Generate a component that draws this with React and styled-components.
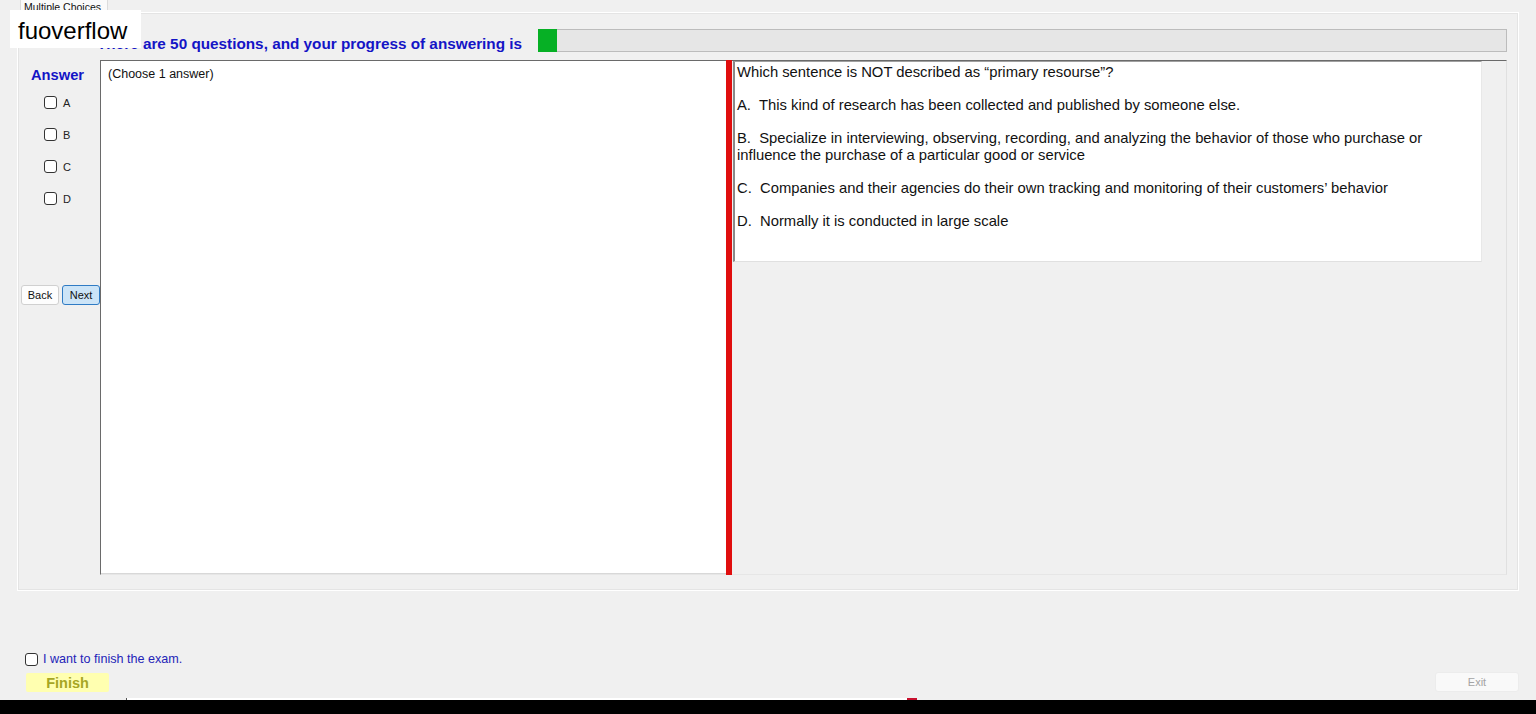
import React from "react";
import styled, { createGlobalStyle } from "styled-components";

const Global = createGlobalStyle`
  html, body { margin: 0; padding: 0; background: #f0f0f0; }
  body { width: 1536px; height: 714px; overflow: hidden; font-family: "Liberation Sans", Arial, sans-serif; }
  * { box-sizing: border-box; }
`;

const Page = styled.div`
  position: relative;
  width: 1536px;
  height: 714px;
  display: flex;
  flex-direction: column;
  background: #f0f0f0;
`;

const TabStrip = styled.div`
  height: 12px;
  display: flex;
  padding-left: 20px;
`;

const Tab = styled.div`
  height: 12px;
  width: 88px;
  background: #fafafa;
  border: 1px solid #dcdcdc;
  border-top: none;
  border-bottom: none;
  font-size: 10.5px;
  line-height: 14px;
  color: #111;
  padding-left: 3px;
  overflow: hidden;
  white-space: nowrap;
`;

const TabPage = styled.div`
  margin: 0 17px;
  height: 579px;
  border: 1px solid #ffffff;
  box-shadow: inset 0 0 0 1px #e4e4e4;
  display: flex;
  flex-direction: column;
  padding-top: 16px;
`;

const Header = styled.div`
  display: flex;
  align-items: flex-end;
  height: 23px;
  padding-left: 79px;
  padding-right: 11px;
`;

const Title = styled.div`
  font-weight: bold;
  font-size: 15.3px;
  line-height: 17px;
  color: #1414c6;
  margin-right: 16px;
  white-space: nowrap;
`;

const Progress = styled.div`
  flex: 1;
  height: 23px;
  background: #e6e6e6;
  border: 1px solid #bcbcbc;
  display: flex;
`;

const ProgressFill = styled.div`
  background: #06b025;
  margin: -1px 0 -1px -1px;
  height: calc(100% + 2px);
`;

const Main = styled.div`
  display: flex;
  height: 515px;
  margin-top: 8px;
  padding-right: 11px;
`;

const LeftCol = styled.div`
  width: 82px;
  display: flex;
  flex-direction: column;
`;

const AnswerLabel = styled.div`
  font-weight: bold;
  font-size: 14.7px;
  line-height: 18px;
  color: #1414c6;
  margin-top: 6px;
  padding-left: 13px;
`;

const Choices = styled.div`
  display: flex;
  flex-direction: column;
  gap: 19px;
  margin-top: 12px;
  padding-left: 26px;
`;

const ChoiceRow = styled.label`
  display: flex;
  align-items: center;
  height: 13px;
  gap: 6px;
  font-size: 11px;
  color: #222;
`;

const Box = styled.span`
  width: 13px;
  height: 13px;
  border: 1px solid #333;
  border-radius: 3px;
  background: #fff;
  flex: none;
`;

const ButtonRow = styled.div`
  display: flex;
  gap: 3px;
  margin-top: 80px;
  padding-left: 3px;
`;

const SmallButton = styled.div`
  width: 38px;
  height: 20px;
  border: 1px solid ${(p) => (p.$active ? "#2f7bc4" : "#d0d0d0")};
  background: ${(p) => (p.$active ? "#cce4f7" : "#fdfdfd")};
  border-radius: 3px;
  font-size: 11px;
  line-height: 18px;
  text-align: center;
  color: #111;
`;

const Split = styled.div`
  flex: 1;
  display: flex;
  border-top: 1px solid #6a6a6a;
  border-left: 1px solid #6a6a6a;
  border-right: 1px solid #e0e0e0;
  border-bottom: 1px solid #e6e6e6;
`;

const LeftPane = styled.div`
  width: 625px;
  background: #fff;
  padding: 6px 7px;
  font-size: 12.5px;
  line-height: 15px;
  color: #111;
  border-bottom: 1px solid #d8d8d8;
`;

const Splitter = styled.div`
  width: 6px;
  background: #e00e0e;
  margin-top: -1px;
  margin-bottom: -1px;
`;

const RightPane = styled.div`
  flex: 1;
  background: #f0f0f0;
  padding-left: 1px;
`;

const QuestionBox = styled.div`
  width: 749px;
  height: 201px;
  background: #fff;
  border-top: 1px solid #a0a0a0;
  border-left: 2px solid #8a8a8a;
  border-right: 1px solid #e8e8e8;
  border-bottom: 1px solid #e0e0e0;
  padding: 2px 0 0 2px;
  font-size: 14.8px;
  line-height: 17px;
  color: #111;
`;

const Para = styled.p`
  margin: 0 0 16px 0;
  white-space: pre;
`;

const Bottom = styled.div`
  display: flex;
  flex-direction: column;
  padding-top: 61px;
`;

const FinishCheck = styled.label`
  display: flex;
  align-items: center;
  height: 14px;
  gap: 5px;
  padding-left: 25px;
  font-size: 12.6px;
  color: #2424b8;
`;

const Footer = styled.div`
  display: flex;
  justify-content: space-between;
  align-items: flex-end;
  height: 20px;
  margin-top: 6px;
  padding: 0 17px 0 26px;
`;

const FinishButton = styled.div`
  width: 83px;
  height: 19px;
  background: #ffffb0;
  border-radius: 2px;
  font-weight: bold;
  font-size: 14.5px;
  line-height: 21px;
  color: #a6a624;
  text-align: center;
`;

const ExitButton = styled.div`
  width: 84px;
  height: 20px;
  background: #f9f9f9;
  border: 1px solid #ececec;
  border-radius: 3px;
  font-size: 11px;
  line-height: 18px;
  color: #a4a4a4;
  text-align: center;
`;

const Strip = styled.div`
  height: 2px;
  margin-top: 6px;
  display: flex;
  padding-left: 126px;
`;

const StripTick = styled.div`
  width: 1px;
  background: #555;
`;

const StripWhite = styled.div`
  width: 780px;
  background: #fff;
`;

const StripRed = styled.div`
  width: 10px;
  background: #c8102e;
`;

const Taskbar = styled.div`
  height: 14px;
  background: #000;
`;

const Watermark = styled.div`
  position: absolute;
  left: 10px;
  top: 10px;
  width: 131px;
  height: 38px;
  background: #fff;
  padding-left: 8px;
  font-size: 24px;
  line-height: 42px;
  color: #000;
`;

const choices = ["A", "B", "C", "D"];

export default function App() {
  return (
    <Page>
      <Global />
      <TabStrip>
        <Tab>Multiple Choices</Tab>
      </TabStrip>
      <TabPage>
        <Header>
          <Title>There are 50 questions, and your progress of answering is</Title>
          <Progress>
            <ProgressFill style={{ width: `${(1 / 50) * 100}%` }} />
          </Progress>
        </Header>
        <Main>
          <LeftCol>
            <AnswerLabel>Answer</AnswerLabel>
            <Choices>
              {choices.map((c) => (
                <ChoiceRow key={c}>
                  <Box />
                  {c}
                </ChoiceRow>
              ))}
            </Choices>
            <ButtonRow>
              <SmallButton>Back</SmallButton>
              <SmallButton $active>Next</SmallButton>
            </ButtonRow>
          </LeftCol>
          <Split>
            <LeftPane>(Choose 1 answer)</LeftPane>
            <Splitter />
            <RightPane>
              <QuestionBox>
                <Para>Which sentence is NOT described as “primary resourse”?</Para>
                <Para>A.  This kind of research has been collected and published by someone else.</Para>
                <Para>
                  B.  Specialize in interviewing, observing, recording, and analyzing the behavior of those who purchase or
                  <br />
                  influence the purchase of a particular good or service
                </Para>
                <Para>C.  Companies and their agencies do their own tracking and monitoring of their customers’ behavior</Para>
                <Para>D.  Normally it is conducted in large scale</Para>
              </QuestionBox>
            </RightPane>
          </Split>
        </Main>
      </TabPage>
      <Bottom>
        <FinishCheck>
          <Box />I want to finish the exam.
        </FinishCheck>
        <Footer>
          <FinishButton>Finish</FinishButton>
          <ExitButton>Exit</ExitButton>
        </Footer>
        <Strip>
          <StripTick />
          <StripWhite />
          <StripRed />
        </Strip>
        <Taskbar />
      </Bottom>
      <Watermark>fuoverflow</Watermark>
    </Page>
  );
}
